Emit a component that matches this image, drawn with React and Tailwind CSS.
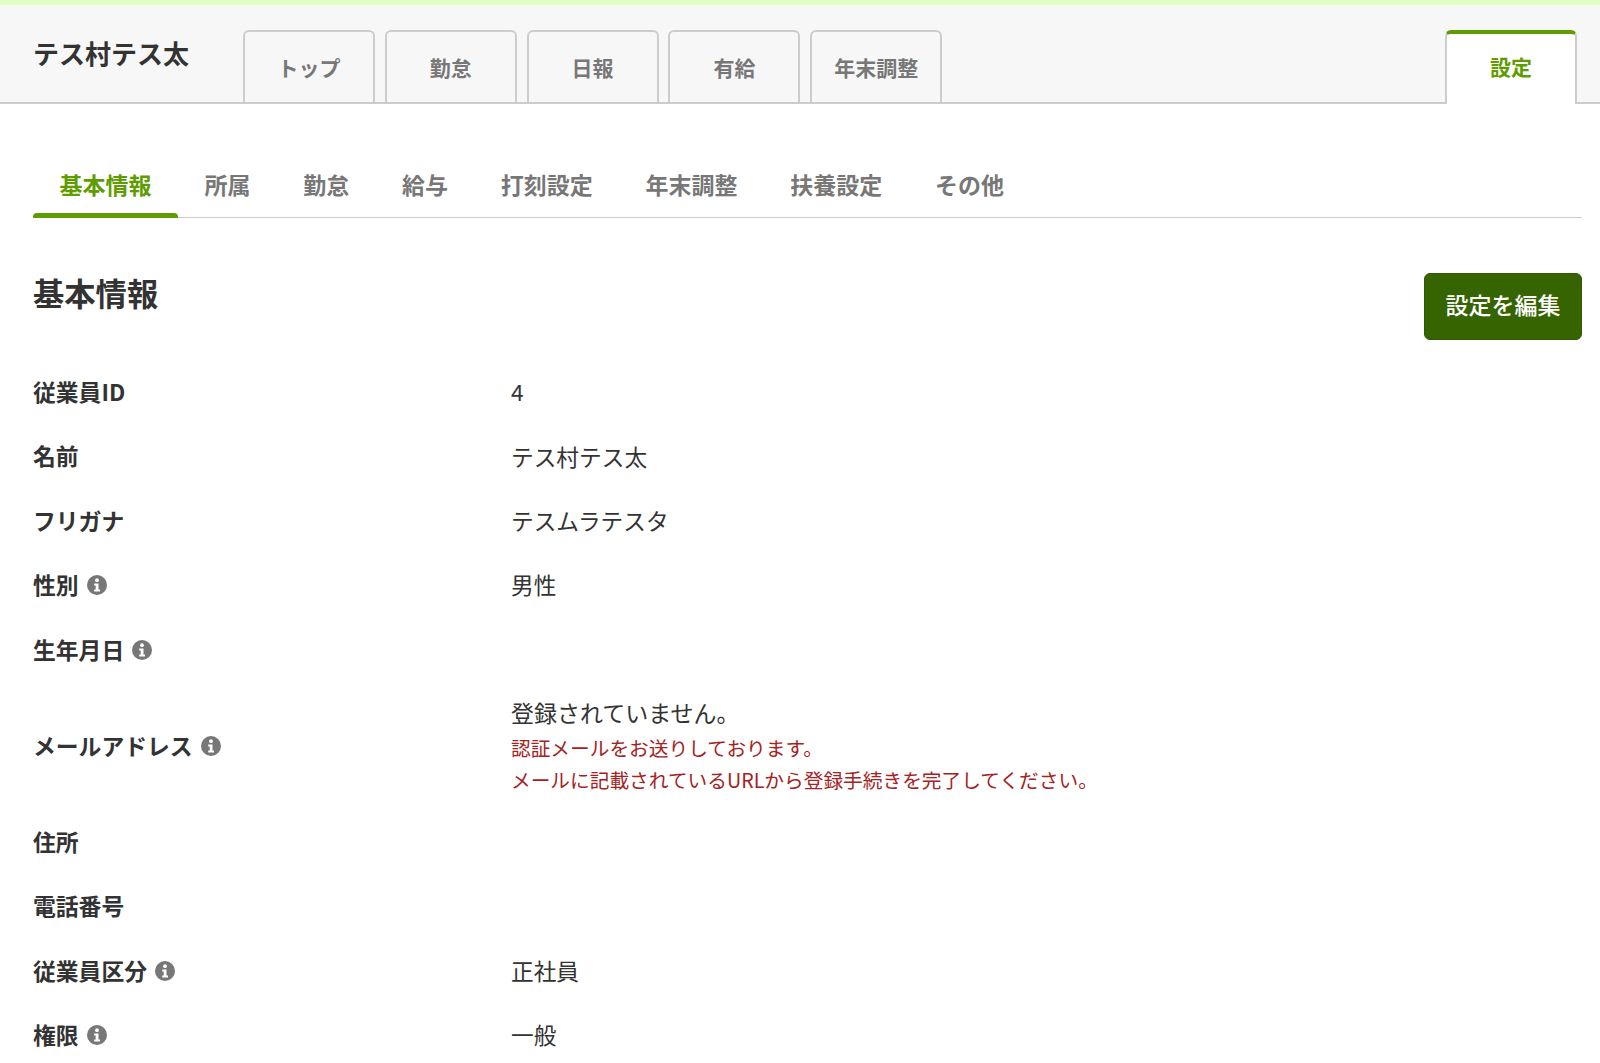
import React from 'react';

const mainTabs = ['トップ', '勤怠', '日報', '有給', '年末調整'];
const subTabs = ['所属', '勤怠', '給与', '打刻設定', '年末調整', '扶養設定', 'その他'];

const rows = [
  { label: '従業員ID', value: '4' },
  { label: '名前', value: 'テス村テス太' },
  { label: 'フリガナ', value: 'テスムラテスタ' },
  { label: '性別', value: '男性', info: true },
  { label: '生年月日', value: '', info: true },
  { label: 'メールアドレス', info: true, email: true },
  { label: '住所', value: '' },
  { label: '電話番号', value: '' },
  { label: '従業員区分', value: '正社員', info: true },
  { label: '権限', value: '一般', info: true },
];

const InfoIcon = () => (
  <svg viewBox="0 0 20 20" className="w-5 h-5 ml-2 shrink-0">
    <circle cx="10" cy="10" r="10" fill="#777777" />
    <circle cx="10" cy="5.2" r="1.9" fill="#ffffff" />
    <path d="M7.2 8.4h4.3v6h1.5v2H7.2v-2h1.5v-4H7.2z" fill="#ffffff" />
  </svg>
);

const App = () => {
  return (
    <div className="h-[1063px] overflow-hidden bg-white text-[#333333] font-['Noto_Sans_CJK_JP',sans-serif]">
      <div className="h-[5px] bg-[#e0ffc0]" />

      <header className="h-[99px] flex items-start bg-[#f7f7f7] border-b-2 border-[#cccccc] pl-[33px] pr-[23px]">
        <div className="w-[210px] pt-[30px] text-[26px] leading-[36px] font-bold">テス村テス太</div>
        <nav className="flex gap-[9.8px] pt-[25px] h-[99px]">
          {mainTabs.map((tab) => (
            <div
              key={tab}
              className="w-[132px] h-[74px] pt-[18px] text-center text-[21px] leading-[34px] font-bold text-[#777777] border-2 border-b-0 border-[#cccccc] rounded-t-[6px]"
            >
              {tab}
            </div>
          ))}
        </nav>
        <div className="ml-auto mt-[25px] w-[132px] h-[74px] pt-[15px] text-center text-[21px] leading-[34px] font-bold text-[#5f9c00] bg-white border-x-2 border-[#cccccc] border-t-4 border-t-[#5f9c00] rounded-t-[6px]">
          設定
        </div>
      </header>

      <main className="pl-[33px] pr-[18px]">
        <nav className="flex mt-[51px] h-[63px] border-b border-[#cccccc]">
          <div className="relative h-[63px] px-[26.5px] pt-[11px] text-[23px] leading-[36px] font-bold text-[#5f9c00]">
            基本情報
            <span className="absolute left-0 right-0 bottom-0 h-[5px] bg-[#5f9c00] rounded-t-[4px]" />
          </div>
          {subTabs.map((tab) => (
            <div key={tab} className="px-[26.4px] pt-[11px] text-[23px] leading-[36px] font-bold text-[#777777]">
              {tab}
            </div>
          ))}
        </nav>

        <div className="flex items-start justify-between mt-[55px]">
          <h2 className="text-[31.3px] leading-[40px] font-bold">基本情報</h2>
          <button className="w-[158px] h-[67px] pb-[4px] text-[23px] font-medium text-white bg-[#366400] border border-[#2f5a00] rounded-[6px]">
            設定を編集
          </button>
        </div>

        <div className="mt-[20px]">
          {rows.map((row) => (
            <div key={row.label} className={`flex items-center ${row.email ? 'h-[128px]' : 'h-[64.4px]'}`}>
              <div className="w-[478px] flex items-center text-[22.8px] font-bold">
                {row.label}
                {row.info && <InfoIcon />}
              </div>
              {row.email ? (
                <div>
                  <div className="mb-[3px] text-[23px] leading-[34px]">登録されていません。</div>
                  <div className="text-[19.7px] leading-[32px] text-[#a52222]">認証メールをお送りしております。</div>
                  <div className="text-[19.7px] leading-[32px] text-[#a52222]">メールに記載されているURLから登録手続きを完了してください。</div>
                </div>
              ) : (
                <div className="text-[22.7px]">{row.value}</div>
              )}
            </div>
          ))}
        </div>
      </main>
    </div>
  );
};

export default App;
